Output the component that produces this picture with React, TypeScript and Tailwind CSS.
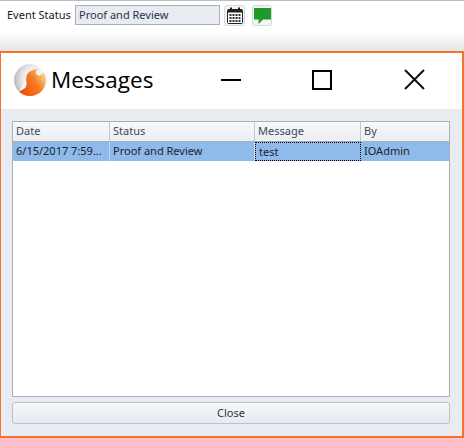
import React from "react";

const COLUMNS = [
  { label: "Date", value: "6/15/2017 7:59...", width: "w-[97px]" },
  { label: "Status", value: "Proof and Review", width: "w-[145px]" },
  { label: "Message", value: "test", width: "w-[106px]" },
  { label: "By", value: "IOAdmin", width: "flex-1" },
];

function CalendarIcon() {
  return (
    <svg width="16" height="17" viewBox="0 0 16 17">
      <rect x="0.5" y="2.5" width="15" height="14" rx="1" fill="#fff" stroke="#222" />
      <rect x="1" y="2" width="14" height="3.5" fill="#222" />
      <rect x="3" y="0.5" width="2" height="3.5" fill="#222" />
      <rect x="11" y="0.5" width="2" height="3.5" fill="#222" />
      {[7, 10, 13].map((y) =>
        [2.5, 5.5, 8.5, 11.5].map((x) => (
          <rect key={`${x}-${y}`} x={x} y={y} width="2" height="2" fill="#333" />
        ))
      )}
    </svg>
  );
}

function BubbleIcon() {
  return (
    <svg width="17" height="17" viewBox="0 0 17 17">
      <path d="M0 0H17V11.5H9L4.5 16V11.5H0Z" fill="#1f9a27" />
    </svg>
  );
}

function Logo() {
  return (
    <svg width="32" height="32" viewBox="0 0 32 32">
      <defs>
        <radialGradient id="ball" cx="0.7" cy="0.45" r="0.75">
          <stop offset="0" stopColor="#ffffff" />
          <stop offset="0.55" stopColor="#ececec" />
          <stop offset="1" stopColor="#b4b4b4" />
        </radialGradient>
        <linearGradient id="swoosh" x1="0.1" y1="0.9" x2="1" y2="0.3">
          <stop offset="0" stopColor="#f0500f" />
          <stop offset="0.6" stopColor="#f57d22" />
          <stop offset="1" stopColor="#fbd38a" />
        </linearGradient>
      </defs>
      <circle cx="16" cy="16" r="16" fill="url(#ball)" />
      <path
        d="M24 5C18 5.5 13.5 8 12.5 12.5C11.5 17 13.5 20 11 24L5 27.5C8 30.5 12 32 16 32C25 32 32 25 32 16C32 13 31 10.5 29.5 8.5C28 11 25 12 23.5 11C21.5 9.5 22 7 24 5Z"
        fill="url(#swoosh)"
      />
      <path d="M5 27.5L11.5 16C13 19 12.8 21.5 11 24Z" fill="#f7f7f7" />
    </svg>
  );
}

export default function App() {
  return (
    <div className="w-[464px] h-[438px] overflow-hidden flex flex-col bg-white font-['Noto_Sans',sans-serif] text-[11px] text-[#1f2a37]">
      {/* Top form strip */}
      <div className="h-[51px] border-t border-[#b8bcc2] bg-[linear-gradient(to_bottom,#ffffff_0,#ffffff_32px,#e4e4e4_100%)] flex items-start pt-1 pl-[7px]">
        <span className="mt-[2px] w-[68px] leading-[16px] text-[#111827]">Event Status</span>
        <div className="w-[145px] h-[20px] bg-[#e8ebf1] border border-[#a9b0bc] pl-[3px] leading-[18px] text-[#2b3444]">
          Proof and Review
        </div>
        <button className="ml-[4px] w-[21px] h-[21px] flex items-center justify-center rounded-[3px] border border-[#d5d8dc] bg-[#f4f5f6]">
          <CalendarIcon />
        </button>
        <button className="ml-[7px] w-[20px] h-[21px] flex items-start justify-end pt-[2px] rounded-[3px] border border-[#d5d8dc] bg-[#f4f5f6]">
          <BubbleIcon />
        </button>
      </div>

      {/* Dialog */}
      <div className="flex-1 flex flex-col border-2 border-l border-[#f47328]">
        <div className="h-[56px] bg-white flex items-center">
          <div className="ml-[13px] mt-[-2px] flex items-center gap-[5px]">
            <Logo />
            <span className="text-[22.5px] leading-none text-black font-['Open_Sans',sans-serif]">Messages</span>
          </div>
          <div className="ml-auto flex items-center h-[20px] mt-[-3px]">
            <div className="w-[20px] h-[2px] bg-black" />
            <div className="ml-[71px] w-[20px] h-[20px] border-2 border-black" />
            <svg className="ml-[72px] mr-[37px]" width="21" height="21" viewBox="0 0 21 21">
              <path d="M1 1L20 20M20 1L1 20" stroke="#111" strokeWidth="2" fill="none" />
            </svg>
          </div>
        </div>

        <div className="flex-1 bg-[#e8ebf1] px-[11px] pt-[12px] flex flex-col">
          <div className="h-[276px] w-[438px] border border-[#a9b0bc] bg-white">
            <div className="flex h-[20px] border-b border-[#a9b0bc] bg-[linear-gradient(to_bottom,#f7f8fa,#eceef3)]">
              {COLUMNS.map((c) => (
                <div key={c.label} className={`${c.width} pl-[3px] leading-[18px] text-[#3d4756] border-r border-[#c3c8d0] last:border-r-0`}>
                  {c.label}
                </div>
              ))}
            </div>
            <div className="flex h-[19px] bg-[#8fbaea]">
              {COLUMNS.map((c) => (
                <div
                  key={c.label}
                  className={`${c.width} pl-[3px] leading-[18px] text-[#1c2430] ${
                    c.label === "Message"
                      ? "border border-dotted border-black pl-[2px] leading-[16px]"
                      : c.label === "By"
                        ? ""
                        : "border-r border-[#c3d6ee]"
                  }`}
                >
                  {c.value}
                </div>
              ))}
            </div>
          </div>

          <button className="mt-[5px] h-[22px] w-[438px] rounded-[3px] border border-[#bcc1c9] bg-[linear-gradient(to_bottom,#f6f8fa,#e6e9ee)] text-[#2b3444] leading-[20px]">
            Close
          </button>
        </div>
      </div>
    </div>
  );
}
